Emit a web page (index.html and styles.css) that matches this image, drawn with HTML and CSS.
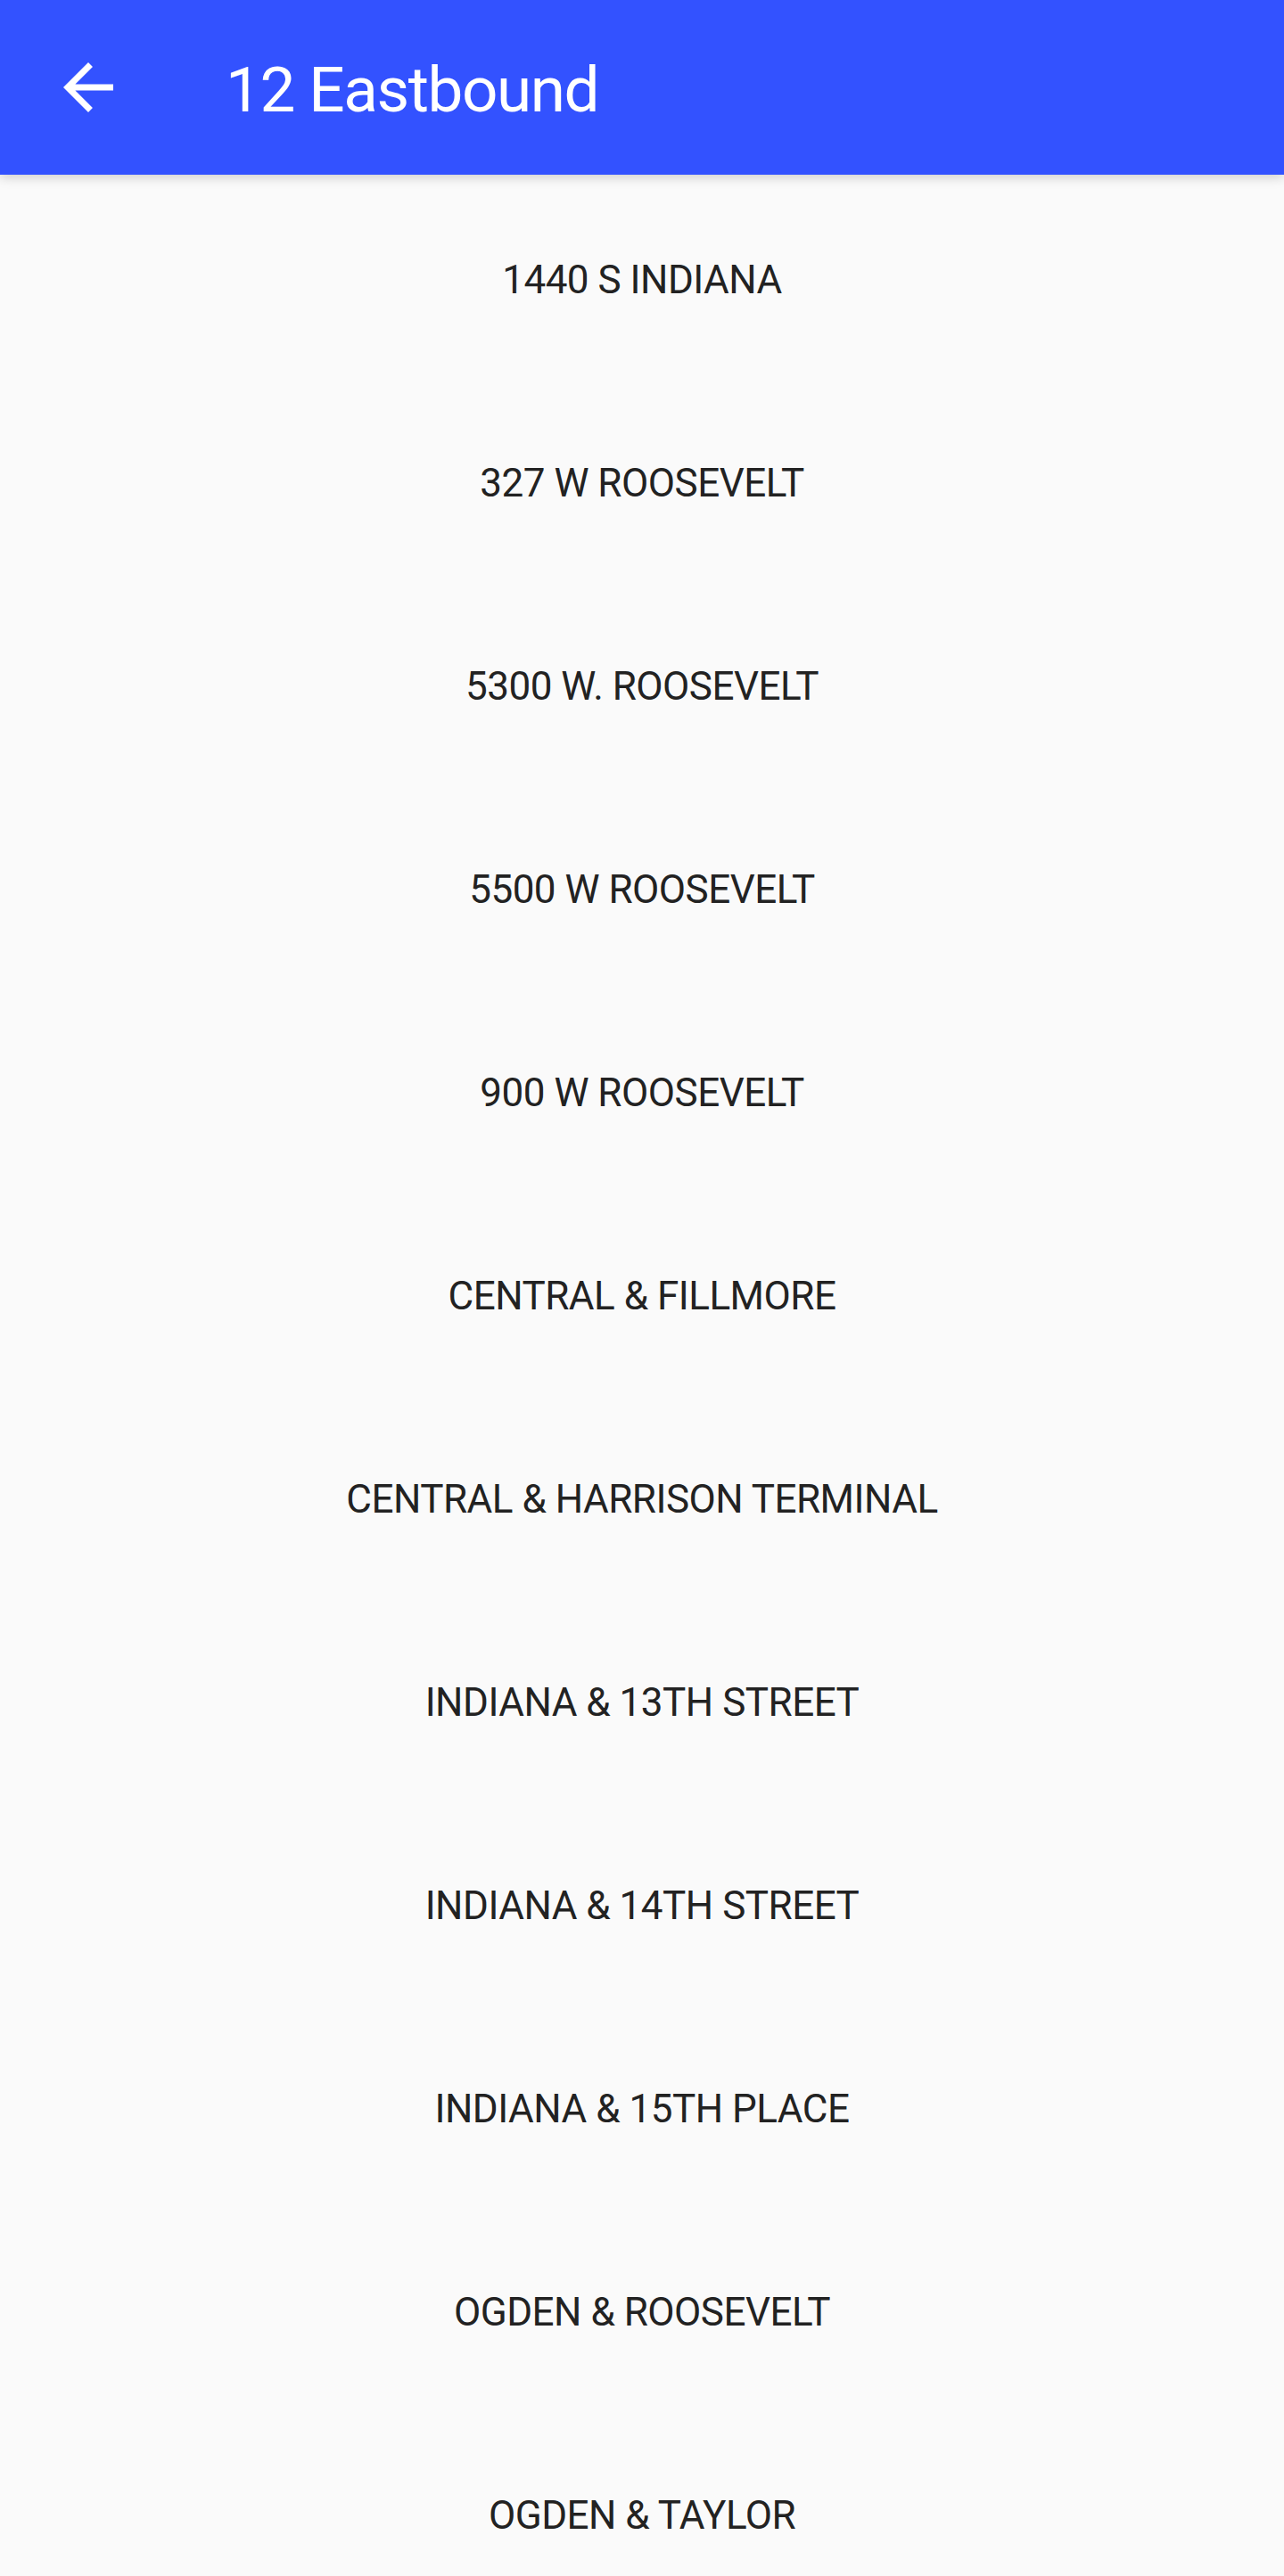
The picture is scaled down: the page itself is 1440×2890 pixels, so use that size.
FILE: index.html
```html
<!DOCTYPE html>
<html lang="en">
<head>
<meta charset="utf-8">
<title>12 Eastbound</title>
<link rel="stylesheet" href="styles.css">
</head>
<body>
<header class="appbar">
  <button class="back" aria-label="Back">
    <svg width="84" height="84" viewBox="0 0 24 24" aria-hidden="true">
      <path d="M20 11H7.83l5.59-5.59L12 4l-8 8 8 8 1.41-1.41L7.83 13H20v-2z" fill="#ffffff"/>
    </svg>
  </button>
  <h1 class="title">12 Eastbound</h1>
</header>
<main class="stops">
  <div class="stop">1440 S INDIANA</div>
  <div class="stop">327 W ROOSEVELT</div>
  <div class="stop">5300 W. ROOSEVELT</div>
  <div class="stop">5500 W ROOSEVELT</div>
  <div class="stop">900 W ROOSEVELT</div>
  <div class="stop">CENTRAL &amp; FILLMORE</div>
  <div class="stop">CENTRAL &amp; HARRISON TERMINAL</div>
  <div class="stop">INDIANA &amp; 13TH STREET</div>
  <div class="stop">INDIANA &amp; 14TH STREET</div>
  <div class="stop">INDIANA &amp; 15TH PLACE</div>
  <div class="stop">OGDEN &amp; ROOSEVELT</div>
  <div class="stop">OGDEN &amp; TAYLOR</div>
</main>
</body>
</html>
```
FILE: styles.css
```css
html, body {
  margin: 0;
  padding: 0;
  background: #fafafa;
}
body {
  width: 1440px;
  height: 2890px;
  overflow: hidden;
  font-family: Roboto, "Noto Sans", sans-serif;
}
.appbar {
  position: relative;
  z-index: 2;
  height: 196px;
  background: #3352ff;
  display: flex;
  align-items: center;
  box-shadow: 0 3px 12px rgba(0, 0, 0, 0.18);
}
.back {
  background: none;
  border: 0;
  padding: 0;
  margin: 0 0 0 57px;
  width: 84px;
  height: 84px;
  display: flex;
  align-items: center;
  justify-content: center;
}
.back svg {
  display: block;
}
.title {
  margin: 4px 0 0 112px;
  font-weight: 400;
  font-size: 71px;
  letter-spacing: -1.4px;
  color: #ffffff;
  line-height: 1;
  white-space: nowrap;
}
.stops {
  display: flex;
  flex-direction: column;
}
.stop {
  height: 228px;
  box-sizing: border-box;
  padding-top: 8px;
  flex: none;
  display: flex;
  align-items: center;
  justify-content: center;
  font-size: 44px;
  color: #222222;
  letter-spacing: -0.5px;
}
```
